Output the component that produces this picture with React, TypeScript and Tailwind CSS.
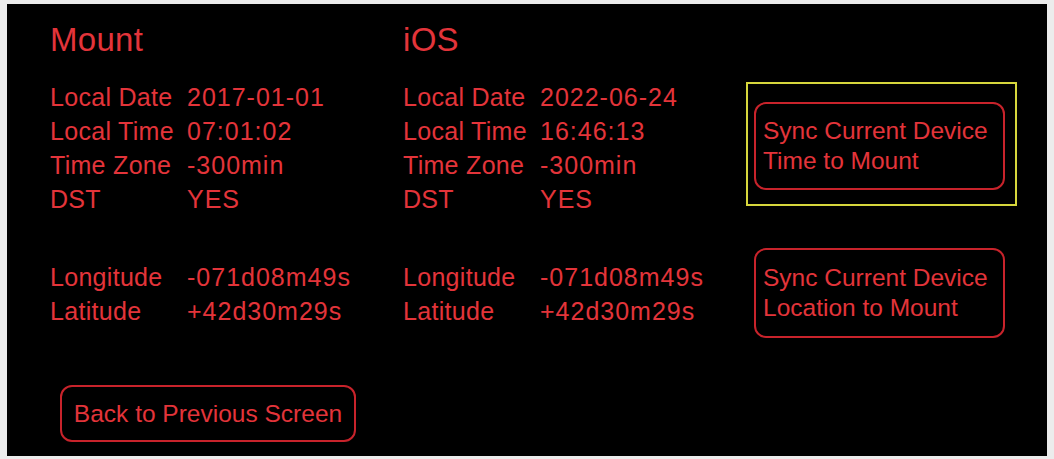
import React from "react";

const font = { fontFamily: '"Liberation Sans", Arial, sans-serif' };

function Row({ label, value }: { label: string; value: string }) {
  return (
    <div className="flex h-[34px] items-center leading-[34px] text-[25px]">
      <span className="w-[137px] shrink-0 tracking-[0.3px]">{label}</span>
      <span className="tracking-[1px]">{value}</span>
    </div>
  );
}

function Column({
  title,
  date,
  time,
  width,
}: {
  title: string;
  date: string;
  time: string;
  width: string;
}) {
  return (
    <div className={`flex flex-col ${width}`}>
      <div className="h-[38px] leading-[38px] text-[33px] tracking-[0.3px]">{title}</div>
      <div className="mt-[21px] flex flex-col">
        <Row label="Local Date" value={date} />
        <Row label="Local Time" value={time} />
        <Row label="Time Zone" value="-300min" />
        <Row label="DST" value="YES" />
      </div>
      <div className="mt-[44px] flex flex-col">
        <Row label="Longitude" value="-071d08m49s" />
        <Row label="Latitude" value="+42d30m29s" />
      </div>
    </div>
  );
}

export default function App() {
  return (
    <div
      className="flex h-[459px] w-[1054px] bg-[#ececec] pt-[4px] pb-[3px] pl-[7px] pr-[7px]"
      style={font}
    >
      <div className="flex flex-1 bg-black pl-[43px] pt-[17px] text-[#e3343a]">
        <div className="flex w-[696px] flex-col">
          <div className="flex">
            <Column title="Mount" date="2017-01-01" time="07:01:02" width="w-[353px]" />
            <Column title="iOS" date="2022-06-24" time="16:46:13" width="w-[343px]" />
          </div>
          <div className="ml-[10px] mt-[57px] flex h-[57px] w-[296px] items-center justify-center rounded-[12px] border-2 border-[#c8232b] text-[24.5px] leading-[30px]">
            Back to Previous Screen
          </div>
        </div>
        <div className="mt-[61px] flex flex-col">
          <div className="h-[124px] w-[271px] border-2 border-[#d6d63c] pl-[6px] pt-[18px]">
            <div className="flex h-[88px] w-[251px] flex-col justify-center rounded-[12px] border-2 border-[#c8232b] pl-[7px] text-[24.5px] leading-[30px]">
              <span>Sync Current Device</span>
              <span>Time to Mount</span>
            </div>
          </div>
          <div className="ml-[8px] mt-[42px] flex h-[90px] w-[251px] flex-col justify-center rounded-[12px] border-2 border-[#c8232b] pl-[7px] text-[24.5px] leading-[30px]">
            <span>Sync Current Device</span>
            <span>Location to Mount</span>
          </div>
        </div>
      </div>
    </div>
  );
}
